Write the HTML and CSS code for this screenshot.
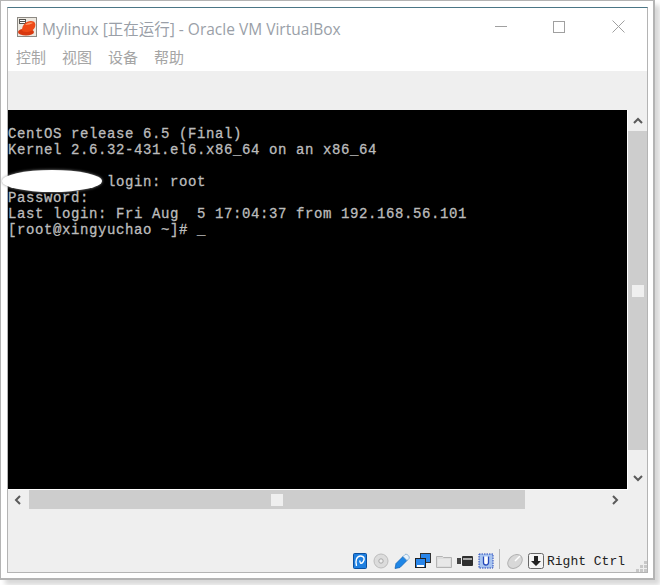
FILE: index.html
```html
<!DOCTYPE html>
<html lang="zh">
<head>
<meta charset="utf-8">
<title>Mylinux</title>
<link rel="stylesheet" href="styles.css">
</head>
<body>
<div class="frame">
  <div class="window">
    <header class="head">
      <div class="titlebar">
        <svg class="appicon" width="20" height="20" viewBox="0 0 20 20">
          <rect x="0.5" y="0.5" width="19" height="19" fill="#ece8e0" stroke="#8d8a84"/>
          <rect x="2" y="2" width="7" height="5" fill="#55534f"/>
          <path d="M3 3.500h5M3 5.500h5" stroke="#fff" stroke-width="1"/>
          <ellipse cx="9" cy="15" rx="8" ry="3.600" fill="#d8380f"/>
          <path d="M5 13C5 8 9 4 14 4c4 0 5 3 4 6-1 3-5 5-9 5-2 0-4-1-4-2z" fill="#ee4a17"/>
          <path d="M8 8c2-2 5-3 8-2-2 1-5 2-8 2z" fill="#ff9a66"/>
        </svg>
        <span class="title">Mylinux [正在运行] - Oracle VM VirtualBox</span>
        <div class="controls">
          <svg class="ctl ctl-min" width="12" height="12" viewBox="0 0 12 12"><path d="M0 5.500h12" stroke="#a0a0a0"/></svg>
          <svg class="ctl ctl-max" width="12" height="12" viewBox="0 0 12 12"><rect x="0.500" y="0.500" width="11" height="11" fill="none" stroke="#a0a0a0"/></svg>
          <svg class="ctl ctl-close" width="13" height="13" viewBox="0 0 13 13"><path d="M0.500 0.500l12 12M12.500 0.500l-12 12" stroke="#a0a0a0" fill="none"/></svg>
        </div>
      </div>
      <nav class="menubar">
        <span>控制</span><span>视图</span><span>设备</span><span>帮助</span>
      </nav>
    </header>
    <div class="toolgap"></div>
    <div class="viewport">
      <div class="screen">
        <pre class="console">CentOS release 6.5 (Final)
Kernel 2.6.32-431.el6.x86_64 on an x86_64

           login: root
Password:
Last login: Fri Aug  5 17:04:37 from 192.168.56.101
[root@xingyuchao ~]# _</pre>
        <div class="redact"></div>
      </div>
      <div class="vscroll">
        <svg class="arrow arrow-up" width="10" height="7" viewBox="0 0 10 7"><path d="M1 6l4-4 4 4" fill="none" stroke="#5a5a5a" stroke-width="2"/></svg>
        <div class="vtrack"><div class="vthumb"></div></div>
        <svg class="arrow arrow-down" width="10" height="7" viewBox="0 0 10 7"><path d="M1 1l4 4 4-4" fill="none" stroke="#5a5a5a" stroke-width="2"/></svg>
      </div>
      <div class="hscroll">
        <svg class="harrow" width="7" height="10" viewBox="0 0 7 10"><path d="M6 1L2 5l4 4" fill="none" stroke="#5a5a5a" stroke-width="2"/></svg>
        <div class="htrack"><div class="hthumb"></div></div>
        <svg class="harrow harrow-r" width="7" height="10" viewBox="0 0 7 10"><path d="M1 1l4 4-4 4" fill="none" stroke="#5a5a5a" stroke-width="2"/></svg>
      </div>
    </div>
    <footer class="statusbar">
      <svg width="16" height="16" viewBox="0 0 16 16"><rect x="1.500" y="0.500" width="13" height="15" rx="1" fill="#1e7fe0" stroke="#0b4f9e"/><path d="M4.500 13C3 8 4.500 3 8.500 3s4.500 3.500 2.500 6-3.500 1-3-1.500" fill="none" stroke="#fff" stroke-width="1.400"/></svg>
      <svg width="16" height="16" viewBox="0 0 16 16"><circle cx="8" cy="8" r="7" fill="#dcdcdc" stroke="#bdbdbd"/><circle cx="8" cy="8" r="2.200" fill="#efefef" stroke="#a8a8a8"/></svg>
      <svg width="16" height="16" viewBox="0 0 16 16"><path d="M1 15.500l1-5 7-7 4 4-7 7z" fill="#1f86e6" stroke="#0d5db0" stroke-width="0.700"/><path d="M9 3.500l2-2c1-.6 2.400 0 3.300 1s1.200 2 .7 3l-2 2z" fill="#e8f2fb" stroke="#6a9cc8" stroke-width="0.700"/></svg>
      <svg width="16" height="16" viewBox="0 0 16 16"><rect x="5.500" y="0.500" width="10" height="9" fill="#2a86ea" stroke="#333"/><rect x="0.500" y="5.500" width="10" height="9" fill="#2a86ea" stroke="#222"/><rect x="2" y="12" width="7" height="2" fill="#fff"/></svg>
      <svg width="16" height="16" viewBox="0 0 16 16"><path d="M0.500 3.500h6l1 1h8v10h-15z" fill="#dedede" stroke="#b4b4b4"/><rect x="2" y="6" width="12" height="7" fill="#e8e8e8"/></svg>
      <svg width="16" height="16" viewBox="0 0 16 16"><rect x="5" y="3" width="11" height="10" rx="1" fill="#2f2f2f"/><path d="M0 5h4v6H0z" fill="#444"/><path d="M6 5h9v2H6z" fill="#aaa"/></svg>
      <svg width="16" height="16" viewBox="0 0 16 16"><rect x="1" y="1" width="14" height="14" fill="#a8c4f0" stroke="#2447b8" stroke-dasharray="1.500 1"/><path d="M5.500 3.500v6a2.500 2.500 0 0 0 5 0v-6" fill="#fff" stroke="#2447b8" stroke-width="1.300"/></svg>
      <span class="divider"></span>
      <svg width="16" height="16" viewBox="0 0 16 16"><ellipse cx="8" cy="8.500" rx="8" ry="6" transform="rotate(-40 8 8.500)" fill="#d8d8d8" stroke="#b2b2b2"/><path d="M8 8l5-5" stroke="#fff" stroke-width="1.500"/></svg>
      <svg class="hostkey" width="16" height="16" viewBox="0 0 16 16"><rect x="0.500" y="0.500" width="15" height="15" rx="2" fill="#f4f4f4" stroke="#666"/><path d="M6 3h4v5h3l-5 5-5-5h3z" fill="#222"/></svg>
      <span class="keyname">Right Ctrl</span>
      <svg class="grip" width="11" height="11" viewBox="0 0 11 11"><path d="M8 0h3v3H8zM4 4h3v3H4zM8 4h3v3H8zM0 8h3v3H0zM4 8h3v3H4zM8 8h3v3H8z" fill="#c8c8c8"/></svg>
    </footer>
  </div>
</div>
</body>
</html>
```

FILE: styles.css
```css
* { box-sizing: border-box; }
html, body { margin: 0; padding: 0; }
body { width: 660px; height: 585px; background: #fff; overflow: hidden; }

.frame {
  width: 655px;
  height: 580px;
  padding: 6px;
  border: 2px solid #b4b4b4;
  border-left-width: 1px;
  border-top-width: 1px;
  background: #fff;
  box-shadow: 5px 5px 5px #d8d8d8;
}
.window {
  width: 641px;
  height: 566px;
  display: flex;
  flex-direction: column;
  background: #efefef;
  border: 1px solid #b4b4b4;
  border-top: 1px solid #4b7686;
}
.head { background: #fff; height: 63px; flex: none; }
.titlebar {
  height: 37px;
  display: flex;
  align-items: center;
  padding: 4px 0 0 9px;
  color: #9a9a9a;
}
.appicon { flex: none; margin-top: -3px; }
.title {
  margin-left: 5px;
  font: 15.500px "Open Sans", "Noto Sans CJK SC", sans-serif;
  color: #9a9fa8;
  white-space: nowrap;
}
.controls { margin-left: auto; margin-top: -4px; display: flex; align-items: center; }
.ctl { display: block; }
.ctl-min { margin-right: 46px; }
.ctl-max { margin-right: 47px; }
.ctl-close { margin-right: 22px; }
.menubar {
  display: flex;
  gap: 16px;
  padding: 2px 0 0 8px;
  font: 15px "Noto Sans CJK SC", sans-serif;
  line-height: 20px;
  color: #a5a5a5;
}
.toolgap { height: 39px; flex: none; }
.viewport {
  display: grid;
  grid-template-columns: 620px 19px;
  grid-template-rows: 380px 19px;
  flex: none;
}
.screen { position: relative; background: #000; border-right: 1px solid #fff; border-bottom: 1px solid #fff; }
.console {
  margin: 0;
  padding: 16px 0 0 0;
  font: 14px/16px "Liberation Mono", monospace;
  letter-spacing: 0.600px;
  color: #bcbcbc;
  -webkit-text-stroke: 0.300px #bcbcbc;
  white-space: pre;
}
.redact {
  position: absolute;
  left: -6px;
  top: 60px;
  width: 100px;
  height: 22px;
  border-radius: 50%;
  background: #fff;
  box-shadow: 0 0 3px #999;
}
.vscroll { display: flex; flex-direction: column; align-items: center; }
.arrow { flex: none; }
.arrow-up { margin: 7px 0 7px; }
.arrow-down { margin-top: 25px; }
.vtrack { width: 19px; height: 319px; flex: none; background: #cdcdcd; display: flex; align-items: center; justify-content: center; }
.vthumb { width: 12px; height: 12px; background: #efefef; }
.hscroll { display: flex; align-items: center; grid-column: 1 / 3; }
.harrow { margin-left: 6px; flex: none; }
.harrow-r { margin-left: 87px; }
.htrack { width: 496px; height: 19px; margin-left: 8px; background: #cdcdcd; display: flex; align-items: center; justify-content: center; }
.hthumb { width: 12px; height: 12px; background: #efefef; }
.statusbar {
  flex: 1;
  display: flex;
  align-items: flex-end;
  justify-content: flex-end;
  gap: 5px;
  padding: 0 0 3px 0;
  position: relative;
}
.statusbar svg { display: block; flex: none; }
.divider { width: 1px; height: 20px; margin: 0 2px 0 0; background: #b8b8b8; }
.hostkey { margin-right: -2px; }
.keyname { font: 13px/16px "Liberation Mono", "DejaVu Sans Mono", monospace; color: #222; white-space: pre; margin: 0 22px -1px 0; }
.grip { position: absolute; right: 0; bottom: 0; }
```
